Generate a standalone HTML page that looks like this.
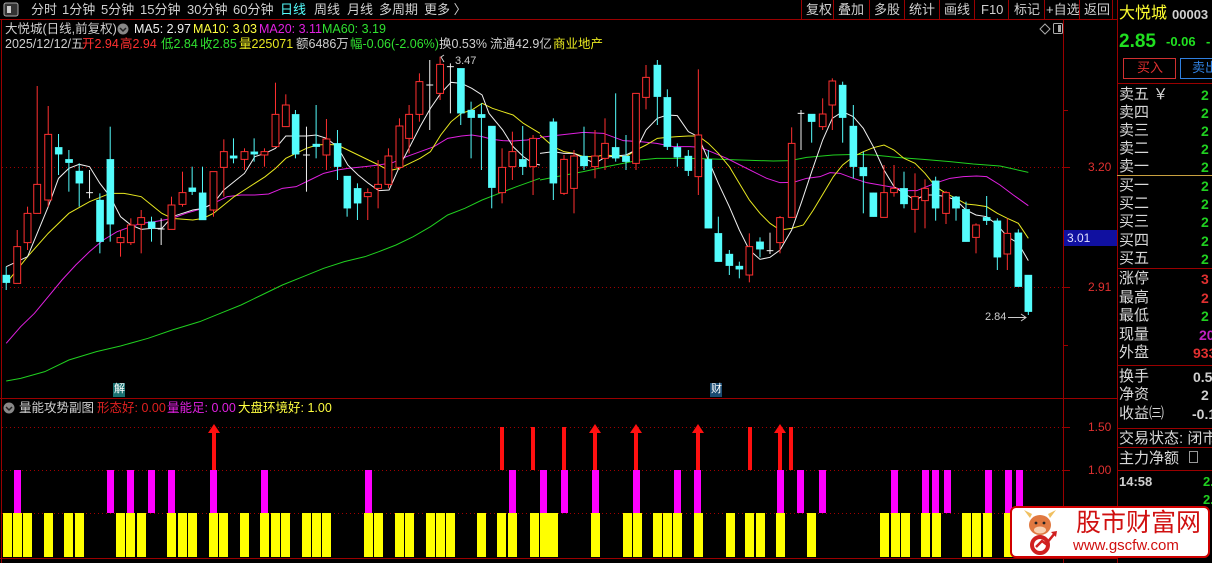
<!DOCTYPE html>
<html><head><meta charset="utf-8"><style>
*{margin:0;padding:0;box-sizing:border-box}
body{width:1212px;height:563px;background:#000;overflow:hidden;position:relative;font-family:"Liberation Sans","Noto Sans CJK SC",sans-serif;font-size:12px;color:#c8c8c8}
.t{position:absolute;white-space:nowrap;line-height:1}
svg{position:absolute;left:0;top:0}
.rp{position:absolute;left:1119px;font-size:15px;color:#d8d8d8;line-height:1;white-space:nowrap}
.rv{position:absolute;left:1201px;font-size:14px;font-weight:bold;line-height:1}
</style></head><body>
<svg width="1212" height="563" viewBox="0 0 1212 563">
<g stroke="#9a0000" stroke-width="1" fill="none">
<line x1="0" y1="19.5" x2="1117" y2="19.5"/>
<line x1="1.5" y1="20" x2="1.5" y2="563"/>
<line x1="0" y1="398.5" x2="1117" y2="398.5"/>
<line x1="0" y1="558.5" x2="1117" y2="558.5"/>
<line x1="1063.5" y1="20" x2="1063.5" y2="563"/>
<line x1="1117.5" y1="0" x2="1117.5" y2="563"/>
<line x1="1117" y1="83.5" x2="1212" y2="83.5"/>
<line x1="1117" y1="268.5" x2="1212" y2="268.5"/>
<line x1="1117" y1="365.5" x2="1212" y2="365.5"/>
<line x1="1117" y1="428.5" x2="1212" y2="428.5"/>
<line x1="1117" y1="447.5" x2="1212" y2="447.5"/>
<line x1="1117" y1="470.5" x2="1212" y2="470.5"/>
<line x1="1063" y1="167.5" x2="1070" y2="167.5"/>
<line x1="1063" y1="287.5" x2="1070" y2="287.5"/>
<line x1="1063" y1="427.5" x2="1070" y2="427.5"/>
<line x1="1063" y1="470.5" x2="1070" y2="470.5"/>
<line x1="1063" y1="513.5" x2="1070" y2="513.5"/>
<line x1="1063" y1="110.5" x2="1068" y2="110.5"/>
<line x1="1063" y1="345.5" x2="1068" y2="345.5"/>
<line x1="801.5" y1="0" x2="801.5" y2="19"/><line x1="833.5" y1="0" x2="833.5" y2="19"/>
<line x1="869.5" y1="0" x2="869.5" y2="19"/><line x1="904.5" y1="0" x2="904.5" y2="19"/>
<line x1="939.5" y1="0" x2="939.5" y2="19"/><line x1="974.5" y1="0" x2="974.5" y2="19"/>
<line x1="1008.5" y1="0" x2="1008.5" y2="19"/><line x1="1044.5" y1="0" x2="1044.5" y2="19"/>
<line x1="1079.5" y1="0" x2="1079.5" y2="19"/><line x1="1112.5" y1="0" x2="1112.5" y2="19"/>
</g>
<line x1="1117" y1="175.5" x2="1212" y2="175.5" stroke="#c8a040"/>
<g stroke="#a00000" stroke-dasharray="1,3">
<line x1="2" y1="167.5" x2="1063" y2="167.5"/>
<line x1="2" y1="287.5" x2="1063" y2="287.5"/>
<line x1="2" y1="427.5" x2="1063" y2="427.5"/>
<line x1="2" y1="470.5" x2="1063" y2="470.5"/>
<line x1="2" y1="513.5" x2="1063" y2="513.5"/>
</g>
<rect x="4" y="3" width="14" height="13" rx="2" fill="#333" stroke="#aaa"/>
<rect x="7" y="6" width="4" height="7" fill="#ccc"/>
<rect x="1064" y="230" width="53" height="16" fill="#1010a0"/>
<rect x="1123.5" y="58.5" width="52" height="20" fill="none" stroke="#d03030"/>
<rect x="1180.5" y="58.5" width="40" height="20" fill="none" stroke="#3080e0"/>
<path d="M1045 23 L1050 28 L1045 33 L1040 28 Z" fill="none" stroke="#aaa" transform="translate(0,1)"/>
<rect x="1053.5" y="23.5" width="9" height="10" rx="1" fill="none" stroke="#aaa"/><rect x="1058" y="25" width="3" height="7" fill="#aaa"/>
<circle cx="123" cy="29" r="5.5" fill="#888"/><path d="M120 28 L123 31 L126 28" stroke="#222" fill="none" stroke-width="1.5"/>
<circle cx="9" cy="408" r="5.5" fill="#888"/><path d="M6 407 L9 410 L12 407" stroke="#222" fill="none" stroke-width="1.5"/>

<g transform="translate(0,50) scale(0.34435,0.33333)" fill="none" stroke-width="1" >
<polyline vector-effect="non-scaling-stroke" stroke="#20d020" points="18,993 60,985 130,965 200,930 280,905 350,888 430,865 500,840 580,815 640,790 700,765 760,735 820,705 880,680 940,655 1000,635 1060,620 1100,605 1150,585 1200,560 1250,530 1300,495 1350,475 1400,450 1450,430 1500,410 1568,385"/>
<polyline vector-effect="non-scaling-stroke" stroke="#e020e0" points="18,880 60,830 100,790 140,740 180,690 220,645 260,605 300,570 340,545 380,530 410,520 450,515 500,505 540,490 590,475 620,460 660,440 700,435 740,435 780,432 820,415 860,410 900,390 940,370 980,360 1010,355 1060,350 1100,345 1140,338 1180,320 1220,305 1260,290 1300,265 1340,258 1370,255 1400,260 1430,268 1460,272 1490,273 1530,270 1568,265"/>
<polyline vector-effect="non-scaling-stroke" stroke="#e8e820" points="18,700 80,620 140,550 200,490 260,455 320,430 360,430 410,440 440,465 470,490 500,505 560,510 590,505 620,490 650,465 680,440 710,420 740,400 770,380 800,355 830,325 860,310 890,295 920,285 950,283 980,285 1010,300 1040,315 1070,330 1100,345 1130,362 1160,355 1190,340 1220,325 1250,305 1280,255 1310,215 1340,190 1370,180 1400,160 1430,175 1460,185 1490,195 1520,220 1568,250"/>
<polyline vector-effect="non-scaling-stroke" stroke="#f0f0f0" points="18,650 80,620 140,470 170,385 200,355 230,343 260,350 290,400 320,440 350,500 380,525 410,538 440,535 470,535 500,500 530,490 560,480 590,475 620,460 650,420 680,395 710,370 740,320 770,310 800,295 830,258 860,258 890,258 918,255 948,265 980,290 1010,345 1040,375 1070,400 1100,422 1130,420 1160,350 1190,290 1220,230 1250,175 1280,130 1310,97 1340,100 1370,115 1400,135 1420,190 1460,240 1490,290 1520,320 1548,340 1568,345"/>
</g>
<g transform="translate(540,50) scale(0.33333)" fill="none">
<polyline vector-effect="non-scaling-stroke" stroke="#20d020" points="0,390 60,378 130,365 200,350 260,338 300,330 350,325 450,325 520,327 600,330 700,333 750,332 800,322 880,315 950,313 1000,315 1070,322 1150,328 1230,335 1300,342 1380,348 1465,367"/>
<polyline vector-effect="non-scaling-stroke" stroke="#e020e0" points="0,262 60,255 130,247 190,250 250,272 300,275 350,280 400,290 450,290 480,292 520,308 560,325 600,345 640,365 680,385 720,398 760,397 800,385 840,380 870,368 900,370 940,385 980,398 1020,405 1060,412 1100,422 1130,422 1160,410 1190,398 1230,385 1270,380 1310,378 1340,380 1380,405 1420,435 1465,467"/>
<polyline vector-effect="non-scaling-stroke" stroke="#e8e820" points="0,255 40,290 72,305 102,310 132,320 165,320 195,315 227,318 258,320 288,300 318,285 352,265 382,262 412,260 445,258 475,258 505,280 535,310 568,350 598,400 628,450 660,490 690,520 720,540 755,535 790,525 820,480 850,430 880,380 908,345 940,320 970,305 1000,293 1032,285 1062,300 1092,325 1125,340 1155,370 1187,410 1218,430 1248,445 1278,462 1308,465 1340,470 1372,490 1402,505 1435,520 1465,565"/>
<polyline vector-effect="non-scaling-stroke" stroke="#f0f0f0" points="0,310 40,305 72,310 102,310 132,325 165,340 195,322 227,318 258,315 288,300 318,240 352,205 382,195 412,197 445,245 475,260 505,330 535,400 568,470 598,540 628,600 660,628 690,622 720,600 755,540 785,455 815,365 848,270 877,205 908,185 940,200 970,235 1000,290 1032,360 1062,410 1092,430 1125,450 1155,435 1187,435 1218,440 1248,450 1278,480 1308,495 1340,500 1372,525 1402,560 1435,580 1465,632"/>
</g>

<g transform="translate(0,50) scale(0.34435,0.33333)">
<g stroke="#ff3030" fill="#000">
<line vector-effect="non-scaling-stroke" x1="50" y1="540" x2="50" y2="700"/><rect vector-effect="non-scaling-stroke" x="40" y="590" width="20" height="110"/>
<line vector-effect="non-scaling-stroke" x1="80" y1="470" x2="80" y2="600"/><rect vector-effect="non-scaling-stroke" x="70" y="490" width="20" height="88"/>
<line vector-effect="non-scaling-stroke" x1="108" y1="108" x2="108" y2="490"/><rect vector-effect="non-scaling-stroke" x="98" y="403" width="20" height="87"/>
<line vector-effect="non-scaling-stroke" x1="140" y1="168" x2="140" y2="470"/><rect vector-effect="non-scaling-stroke" x="130" y="253" width="20" height="197"/>
<line vector-effect="non-scaling-stroke" x1="350" y1="540" x2="350" y2="620"/><rect vector-effect="non-scaling-stroke" x="340" y="563" width="20" height="15"/>
<line vector-effect="non-scaling-stroke" x1="380" y1="505" x2="380" y2="585"/><rect vector-effect="non-scaling-stroke" x="370" y="525" width="20" height="53"/>
<line vector-effect="non-scaling-stroke" x1="410" y1="480" x2="410" y2="610"/><rect vector-effect="non-scaling-stroke" x="400" y="503" width="20" height="20"/>
<line vector-effect="non-scaling-stroke" x1="498" y1="440" x2="498" y2="538"/><rect vector-effect="non-scaling-stroke" x="488" y="465" width="20" height="73"/>
<line vector-effect="non-scaling-stroke" x1="530" y1="365" x2="530" y2="470"/><rect vector-effect="non-scaling-stroke" x="520" y="428" width="20" height="35"/>
<line vector-effect="non-scaling-stroke" x1="620" y1="365" x2="620" y2="500"/><rect vector-effect="non-scaling-stroke" x="610" y="365" width="20" height="115"/>
<line vector-effect="non-scaling-stroke" x1="650" y1="268" x2="650" y2="440"/><rect vector-effect="non-scaling-stroke" x="640" y="305" width="20" height="47"/>
<line vector-effect="non-scaling-stroke" x1="710" y1="295" x2="710" y2="360"/><rect vector-effect="non-scaling-stroke" x="700" y="305" width="20" height="23"/>
<line vector-effect="non-scaling-stroke" x1="768" y1="295" x2="768" y2="350"/><rect vector-effect="non-scaling-stroke" x="758" y="305" width="20" height="10"/>
<line vector-effect="non-scaling-stroke" x1="800" y1="98" x2="800" y2="290"/><rect vector-effect="non-scaling-stroke" x="790" y="193" width="20" height="97"/>
<line vector-effect="non-scaling-stroke" x1="830" y1="133" x2="830" y2="230"/><rect vector-effect="non-scaling-stroke" x="820" y="165" width="20" height="65"/>
<line vector-effect="non-scaling-stroke" x1="948" y1="207" x2="948" y2="360"/><rect vector-effect="non-scaling-stroke" x="938" y="267" width="20" height="48"/>
<line vector-effect="non-scaling-stroke" x1="1068" y1="415" x2="1068" y2="510"/><rect vector-effect="non-scaling-stroke" x="1058" y="428" width="20" height="12"/>
<line vector-effect="non-scaling-stroke" x1="1098" y1="330" x2="1098" y2="475"/><rect vector-effect="non-scaling-stroke" x="1088" y="403" width="20" height="12"/>
<line vector-effect="non-scaling-stroke" x1="1128" y1="295" x2="1128" y2="415"/><rect vector-effect="non-scaling-stroke" x="1118" y="318" width="20" height="85"/>
<line vector-effect="non-scaling-stroke" x1="1160" y1="205" x2="1160" y2="360"/><rect vector-effect="non-scaling-stroke" x="1150" y="228" width="20" height="124"/>
<line vector-effect="non-scaling-stroke" x1="1188" y1="165" x2="1188" y2="310"/><rect vector-effect="non-scaling-stroke" x="1178" y="193" width="20" height="72"/>
<line vector-effect="non-scaling-stroke" x1="1218" y1="70" x2="1218" y2="215"/><rect vector-effect="non-scaling-stroke" x="1208" y="95" width="20" height="98"/>
<line vector-effect="non-scaling-stroke" x1="1278" y1="20" x2="1278" y2="150"/><rect vector-effect="non-scaling-stroke" x="1268" y="43" width="20" height="87"/>
<line vector-effect="non-scaling-stroke" x1="1458" y1="295" x2="1458" y2="460"/><rect vector-effect="non-scaling-stroke" x="1448" y="352" width="20" height="76"/>
<line vector-effect="non-scaling-stroke" x1="1488" y1="245" x2="1488" y2="390"/><rect vector-effect="non-scaling-stroke" x="1478" y="305" width="20" height="45"/>
<line vector-effect="non-scaling-stroke" x1="1548" y1="255" x2="1548" y2="435"/><rect vector-effect="non-scaling-stroke" x="1538" y="265" width="20" height="85"/>
</g>
<g stroke="#54fcfc" fill="#54fcfc">
<line vector-effect="non-scaling-stroke" x1="18" y1="650" x2="18" y2="720"/><rect x="8" y="675" width="21" height="23"/>
<line vector-effect="non-scaling-stroke" x1="170" y1="252" x2="170" y2="375"/><rect x="160" y="292" width="21" height="21"/>
<line vector-effect="non-scaling-stroke" x1="200" y1="300" x2="200" y2="425"/><rect x="190" y="328" width="21" height="10"/>
<line vector-effect="non-scaling-stroke" x1="230" y1="340" x2="230" y2="470"/><rect x="220" y="363" width="21" height="37"/>
<line vector-effect="non-scaling-stroke" x1="290" y1="430" x2="290" y2="610"/><rect x="280" y="450" width="21" height="125"/>
<line vector-effect="non-scaling-stroke" x1="320" y1="230" x2="320" y2="575"/><rect x="310" y="328" width="21" height="195"/>
<line vector-effect="non-scaling-stroke" x1="440" y1="500" x2="440" y2="575"/><rect x="430" y="515" width="21" height="20"/>
<line vector-effect="non-scaling-stroke" x1="558" y1="350" x2="558" y2="435"/><rect x="548" y="413" width="21" height="12"/>
<line vector-effect="non-scaling-stroke" x1="588" y1="350" x2="588" y2="510"/><rect x="578" y="428" width="21" height="82"/>
<line vector-effect="non-scaling-stroke" x1="678" y1="265" x2="678" y2="340"/><rect x="668" y="317" width="21" height="8"/>
<line vector-effect="non-scaling-stroke" x1="738" y1="265" x2="738" y2="335"/><rect x="728" y="305" width="21" height="8"/>
<line vector-effect="non-scaling-stroke" x1="858" y1="180" x2="858" y2="325"/><rect x="848" y="193" width="21" height="120"/>
<line vector-effect="non-scaling-stroke" x1="918" y1="165" x2="918" y2="325"/><rect x="908" y="282" width="21" height="8"/>
<line vector-effect="non-scaling-stroke" x1="980" y1="240" x2="980" y2="390"/><rect x="970" y="280" width="21" height="70"/>
<line vector-effect="non-scaling-stroke" x1="1008" y1="378" x2="1008" y2="500"/><rect x="998" y="378" width="21" height="97"/>
<line vector-effect="non-scaling-stroke" x1="1038" y1="400" x2="1038" y2="510"/><rect x="1028" y="415" width="21" height="45"/>
<line vector-effect="non-scaling-stroke" x1="1338" y1="55" x2="1338" y2="225"/><rect x="1328" y="55" width="21" height="135"/>
<line vector-effect="non-scaling-stroke" x1="1368" y1="155" x2="1368" y2="325"/><rect x="1358" y="180" width="21" height="23"/>
<line vector-effect="non-scaling-stroke" x1="1398" y1="160" x2="1398" y2="360"/><rect x="1388" y="193" width="21" height="10"/>
<line vector-effect="non-scaling-stroke" x1="1428" y1="228" x2="1428" y2="475"/><rect x="1418" y="228" width="21" height="185"/>
<line vector-effect="non-scaling-stroke" x1="1518" y1="228" x2="1518" y2="375"/><rect x="1508" y="328" width="21" height="22"/>
</g>
<g stroke="#f0f0f0">
<line vector-effect="non-scaling-stroke" x1="260" y1="360" x2="260" y2="445"/><line vector-effect="non-scaling-stroke" x1="250" y1="428" x2="270" y2="428"/>
<line vector-effect="non-scaling-stroke" x1="468" y1="505" x2="468" y2="585"/><line vector-effect="non-scaling-stroke" x1="458" y1="537" x2="478" y2="537"/>
<line vector-effect="non-scaling-stroke" x1="890" y1="230" x2="890" y2="425"/><line vector-effect="non-scaling-stroke" x1="880" y1="315" x2="900" y2="315"/>
<line vector-effect="non-scaling-stroke" x1="1248" y1="30" x2="1248" y2="240"/><line vector-effect="non-scaling-stroke" x1="1238" y1="105" x2="1258" y2="105"/>
<line vector-effect="non-scaling-stroke" x1="1308" y1="40" x2="1308" y2="190"/><line vector-effect="non-scaling-stroke" x1="1298" y1="50" x2="1318" y2="50"/>
</g>
</g>

<g transform="translate(540,50) scale(0.33333)">
<g stroke="#ff3030" fill="#000">
<line vector-effect="non-scaling-stroke" x1="72" y1="315" x2="72" y2="435"/><rect vector-effect="non-scaling-stroke" x="62" y="328" width="20" height="102"/>
<line vector-effect="non-scaling-stroke" x1="102" y1="300" x2="102" y2="490"/><rect vector-effect="non-scaling-stroke" x="92" y="318" width="20" height="97"/>
<line vector-effect="non-scaling-stroke" x1="165" y1="240" x2="165" y2="385"/><rect vector-effect="non-scaling-stroke" x="155" y="318" width="20" height="32"/>
<line vector-effect="non-scaling-stroke" x1="195" y1="205" x2="195" y2="360"/><rect vector-effect="non-scaling-stroke" x="185" y="280" width="20" height="45"/>
<line vector-effect="non-scaling-stroke" x1="288" y1="130" x2="288" y2="360"/><rect vector-effect="non-scaling-stroke" x="278" y="130" width="20" height="210"/>
<line vector-effect="non-scaling-stroke" x1="318" y1="45" x2="318" y2="178"/><rect vector-effect="non-scaling-stroke" x="308" y="82" width="20" height="60"/>
<line vector-effect="non-scaling-stroke" x1="475" y1="58" x2="475" y2="435"/><rect vector-effect="non-scaling-stroke" x="465" y="255" width="20" height="125"/>
<line vector-effect="non-scaling-stroke" x1="628" y1="550" x2="628" y2="697"/><rect vector-effect="non-scaling-stroke" x="618" y="590" width="20" height="85"/>
<line vector-effect="non-scaling-stroke" x1="720" y1="498" x2="720" y2="610"/><rect vector-effect="non-scaling-stroke" x="710" y="503" width="20" height="75"/>
<line vector-effect="non-scaling-stroke" x1="755" y1="232" x2="755" y2="502"/><rect vector-effect="non-scaling-stroke" x="745" y="280" width="20" height="222"/>
<line vector-effect="non-scaling-stroke" x1="848" y1="145" x2="848" y2="240"/><rect vector-effect="non-scaling-stroke" x="838" y="192" width="20" height="38"/>
<line vector-effect="non-scaling-stroke" x1="877" y1="85" x2="877" y2="240"/><rect vector-effect="non-scaling-stroke" x="867" y="93" width="20" height="72"/>
<line vector-effect="non-scaling-stroke" x1="1032" y1="345" x2="1032" y2="502"/><rect vector-effect="non-scaling-stroke" x="1022" y="428" width="20" height="74"/>
<line vector-effect="non-scaling-stroke" x1="1062" y1="345" x2="1062" y2="440"/><rect vector-effect="non-scaling-stroke" x="1052" y="415" width="20" height="13"/>
<line vector-effect="non-scaling-stroke" x1="1125" y1="370" x2="1125" y2="548"/><rect vector-effect="non-scaling-stroke" x="1115" y="440" width="20" height="38"/>
<line vector-effect="non-scaling-stroke" x1="1155" y1="388" x2="1155" y2="535"/><rect vector-effect="non-scaling-stroke" x="1145" y="415" width="20" height="37"/>
<line vector-effect="non-scaling-stroke" x1="1218" y1="423" x2="1218" y2="522"/><rect vector-effect="non-scaling-stroke" x="1208" y="428" width="20" height="62"/>
<line vector-effect="non-scaling-stroke" x1="1308" y1="520" x2="1308" y2="610"/><rect vector-effect="non-scaling-stroke" x="1298" y="525" width="20" height="37"/>
<line vector-effect="non-scaling-stroke" x1="1402" y1="505" x2="1402" y2="660"/><rect vector-effect="non-scaling-stroke" x="1392" y="550" width="20" height="62"/>
</g>
<g stroke="#54fcfc" fill="#54fcfc">
<line vector-effect="non-scaling-stroke" x1="40" y1="205" x2="40" y2="450"/><rect x="29" y="215" width="22" height="185"/>
<line vector-effect="non-scaling-stroke" x1="132" y1="230" x2="132" y2="360"/><rect x="121" y="318" width="22" height="30"/>
<line vector-effect="non-scaling-stroke" x1="227" y1="130" x2="227" y2="335"/><rect x="216" y="292" width="22" height="33"/>
<line vector-effect="non-scaling-stroke" x1="258" y1="255" x2="258" y2="360"/><rect x="247" y="318" width="22" height="17"/>
<line vector-effect="non-scaling-stroke" x1="352" y1="30" x2="352" y2="225"/><rect x="341" y="45" width="22" height="95"/>
<line vector-effect="non-scaling-stroke" x1="382" y1="118" x2="382" y2="300"/><rect x="371" y="142" width="22" height="148"/>
<line vector-effect="non-scaling-stroke" x1="412" y1="280" x2="412" y2="350"/><rect x="401" y="292" width="22" height="30"/>
<line vector-effect="non-scaling-stroke" x1="445" y1="300" x2="445" y2="378"/><rect x="434" y="318" width="22" height="44"/>
<line vector-effect="non-scaling-stroke" x1="505" y1="300" x2="505" y2="535"/><rect x="494" y="328" width="22" height="207"/>
<line vector-effect="non-scaling-stroke" x1="535" y1="500" x2="535" y2="635"/><rect x="524" y="550" width="22" height="85"/>
<line vector-effect="non-scaling-stroke" x1="568" y1="600" x2="568" y2="675"/><rect x="557" y="612" width="22" height="35"/>
<line vector-effect="non-scaling-stroke" x1="598" y1="635" x2="598" y2="685"/><rect x="587" y="648" width="22" height="10"/>
<line vector-effect="non-scaling-stroke" x1="660" y1="562" x2="660" y2="622"/><rect x="649" y="575" width="22" height="23"/>
<line vector-effect="non-scaling-stroke" x1="815" y1="192" x2="815" y2="278"/><rect x="804" y="192" width="22" height="23"/>
<line vector-effect="non-scaling-stroke" x1="908" y1="95" x2="908" y2="278"/><rect x="897" y="105" width="22" height="98"/>
<line vector-effect="non-scaling-stroke" x1="940" y1="165" x2="940" y2="385"/><rect x="929" y="228" width="22" height="122"/>
<line vector-effect="non-scaling-stroke" x1="970" y1="305" x2="970" y2="490"/><rect x="959" y="352" width="22" height="26"/>
<line vector-effect="non-scaling-stroke" x1="1000" y1="428" x2="1000" y2="500"/><rect x="989" y="428" width="22" height="72"/>
<line vector-effect="non-scaling-stroke" x1="1092" y1="365" x2="1092" y2="475"/><rect x="1081" y="415" width="22" height="47"/>
<line vector-effect="non-scaling-stroke" x1="1187" y1="380" x2="1187" y2="512"/><rect x="1176" y="392" width="22" height="83"/>
<line vector-effect="non-scaling-stroke" x1="1248" y1="438" x2="1248" y2="512"/><rect x="1237" y="440" width="22" height="35"/>
<line vector-effect="non-scaling-stroke" x1="1278" y1="455" x2="1278" y2="575"/><rect x="1267" y="478" width="22" height="97"/>
<line vector-effect="non-scaling-stroke" x1="1340" y1="438" x2="1340" y2="525"/><rect x="1329" y="502" width="22" height="10"/>
<line vector-effect="non-scaling-stroke" x1="1372" y1="505" x2="1372" y2="660"/><rect x="1361" y="512" width="22" height="110"/>
<line vector-effect="non-scaling-stroke" x1="1435" y1="538" x2="1435" y2="710"/><rect x="1424" y="548" width="22" height="162"/>
<line vector-effect="non-scaling-stroke" x1="1465" y1="675" x2="1465" y2="795"/><rect x="1454" y="675" width="22" height="110"/>
</g>
<g stroke="#f0f0f0">
<line vector-effect="non-scaling-stroke" x1="690" y1="548" x2="690" y2="612"/><line vector-effect="non-scaling-stroke" x1="680" y1="602" x2="700" y2="602"/>
<line vector-effect="non-scaling-stroke" x1="783" y1="180" x2="783" y2="300"/><line vector-effect="non-scaling-stroke" x1="773" y1="190" x2="793" y2="190"/>
</g>
</g>
<g stroke="#ccc" fill="none">
<line x1="1008" y1="317.5" x2="1026" y2="317.5"/><path d="M1021 314 L1026 317.5 L1021 321"/>
<path d="M444 62 L441 57 L444 55"/>
</g>
<rect x="113" y="383" width="12" height="14" fill="#1a7070"/>
<rect x="710" y="383" width="12" height="14" fill="#1a4a70"/>

<g fill="#ffff00">
<rect x="3" y="513" width="9" height="44"/><rect x="13" y="513" width="9" height="44"/><rect x="23" y="513" width="9" height="44"/>
<rect x="44" y="513" width="9" height="44"/><rect x="64" y="513" width="9" height="44"/><rect x="75" y="513" width="9" height="44"/>
<rect x="116" y="513" width="9" height="44"/><rect x="126" y="513" width="9" height="44"/><rect x="137" y="513" width="9" height="44"/>
<rect x="167" y="513" width="9" height="44"/><rect x="178" y="513" width="9" height="44"/><rect x="188" y="513" width="9" height="44"/>
<rect x="209" y="513" width="9" height="44"/><rect x="219" y="513" width="9" height="44"/><rect x="240" y="513" width="9" height="44"/>
<rect x="260" y="513" width="9" height="44"/><rect x="271" y="513" width="9" height="44"/><rect x="281" y="513" width="9" height="44"/>
<rect x="302" y="513" width="9" height="44"/><rect x="312" y="513" width="9" height="44"/><rect x="322" y="513" width="9" height="44"/>
<rect x="364" y="513" width="9" height="44"/><rect x="374" y="513" width="9" height="44"/><rect x="395" y="513" width="9" height="44"/>
<rect x="405" y="513" width="9" height="44"/><rect x="426" y="513" width="9" height="44"/><rect x="436" y="513" width="9" height="44"/>
<rect x="446" y="513" width="9" height="44"/><rect x="477" y="513" width="9" height="44"/><rect x="497" y="513" width="9" height="44"/>
<rect x="508" y="513" width="9" height="44"/><rect x="530" y="513" width="9" height="44"/><rect x="540" y="513" width="9" height="44"/>
<rect x="549" y="513" width="9" height="44"/><rect x="591" y="513" width="9" height="44"/><rect x="623" y="513" width="9" height="44"/>
<rect x="633" y="513" width="9" height="44"/><rect x="653" y="513" width="9" height="44"/><rect x="663" y="513" width="9" height="44"/>
<rect x="673" y="513" width="9" height="44"/><rect x="694" y="513" width="9" height="44"/><rect x="726" y="513" width="9" height="44"/>
<rect x="745" y="513" width="9" height="44"/><rect x="756" y="513" width="9" height="44"/><rect x="776" y="513" width="9" height="44"/>
<rect x="807" y="513" width="9" height="44"/><rect x="880" y="513" width="9" height="44"/><rect x="891" y="513" width="9" height="44"/>
<rect x="901" y="513" width="9" height="44"/><rect x="921" y="513" width="9" height="44"/><rect x="932" y="513" width="9" height="44"/>
<rect x="962" y="513" width="9" height="44"/><rect x="972" y="513" width="9" height="44"/><rect x="983" y="513" width="9" height="44"/>
<rect x="1004" y="513" width="9" height="44"/>
</g>
<g fill="#ff00ff">
<rect x="14" y="470" width="7" height="43"/><rect x="107" y="470" width="7" height="43"/><rect x="127" y="470" width="7" height="43"/>
<rect x="148" y="470" width="7" height="43"/><rect x="168" y="470" width="7" height="43"/><rect x="210" y="470" width="7" height="43"/>
<rect x="261" y="470" width="7" height="43"/><rect x="365" y="470" width="7" height="43"/><rect x="509" y="470" width="7" height="43"/>
<rect x="540" y="470" width="7" height="43"/><rect x="561" y="470" width="7" height="43"/><rect x="592" y="470" width="7" height="43"/>
<rect x="633" y="470" width="7" height="43"/><rect x="674" y="470" width="7" height="43"/><rect x="694" y="470" width="7" height="43"/>
<rect x="777" y="470" width="7" height="43"/><rect x="797" y="470" width="7" height="43"/><rect x="819" y="470" width="7" height="43"/>
<rect x="891" y="470" width="7" height="43"/><rect x="922" y="470" width="7" height="43"/><rect x="932" y="470" width="7" height="43"/>
<rect x="944" y="470" width="7" height="43"/><rect x="985" y="470" width="7" height="43"/><rect x="1005" y="470" width="7" height="43"/>
<rect x="1016" y="470" width="7" height="43"/>
</g>
<g fill="#ff1010">
<rect x="500" y="427" width="4" height="43"/><rect x="531" y="427" width="4" height="43"/><rect x="562" y="427" width="4" height="43"/>
<rect x="748" y="427" width="4" height="43"/><rect x="789" y="427" width="4" height="43"/>
<rect x="212" y="432" width="4" height="38"/><path d="M208 433 L214 424 L220 433 Z"/>
<rect x="593" y="432" width="4" height="38"/><path d="M589 433 L595 424 L601 433 Z"/>
<rect x="634" y="432" width="4" height="38"/><path d="M630 433 L636 424 L642 433 Z"/>
<rect x="696" y="432" width="4" height="38"/><path d="M692 433 L698 424 L704 433 Z"/>
<rect x="778" y="432" width="4" height="38"/><path d="M774 433 L780 424 L786 433 Z"/>
</g>
<rect x="1189.5" y="451.5" width="8" height="11" fill="none" stroke="#999"/>
<rect x="1011" y="507" width="198" height="50" rx="5" fill="#fff" stroke="#d00000" stroke-width="2"/>
<ellipse cx="1040" cy="525" rx="11" ry="10" fill="#e07840"/>
<path d="M1030 518 L1024 510 L1032 514 Z M1050 518 L1056 510 L1048 514 Z" fill="#f0c060"/>
<ellipse cx="1040" cy="530" rx="6" ry="3.5" fill="#f8d0b0"/>
<circle cx="1036" cy="523" r="1.4" fill="#222"/><circle cx="1044" cy="523" r="1.4" fill="#222"/>
<circle cx="1040" cy="545" r="8" fill="none" stroke="#d02020" stroke-width="4"/>
<path d="M1036 547 L1042 541 L1046 544 L1055 533" stroke="#d02020" stroke-width="2.5" fill="none"/>
<path d="M1051 532 L1057 531 L1056 537 Z" fill="#d02020"/>
</svg>

<div class="t" style="left:31px;top:3px;font-size:13px;color:#d0d0d0">分时</div>
<div class="t" style="left:62px;top:3px;font-size:13px;color:#d0d0d0">1分钟</div>
<div class="t" style="left:101px;top:3px;font-size:13px;color:#d0d0d0">5分钟</div>
<div class="t" style="left:140px;top:3px;font-size:13px;color:#d0d0d0">15分钟</div>
<div class="t" style="left:187px;top:3px;font-size:13px;color:#d0d0d0">30分钟</div>
<div class="t" style="left:233px;top:3px;font-size:13px;color:#d0d0d0">60分钟</div>
<div class="t" style="left:280px;top:3px;font-size:13px;color:#54fcfc">日线</div>
<div class="t" style="left:314px;top:3px;font-size:13px;color:#d0d0d0">周线</div>
<div class="t" style="left:347px;top:3px;font-size:13px;color:#d0d0d0">月线</div>
<div class="t" style="left:379px;top:3px;font-size:13px;color:#d0d0d0">多周期</div>
<div class="t" style="left:424px;top:3px;font-size:13px;color:#d0d0d0">更多 〉</div>
<div class="t" style="left:806px;top:3px;font-size:13px;color:#d0d0d0">复权</div>
<div class="t" style="left:838px;top:3px;font-size:13px;color:#d0d0d0">叠加</div>
<div class="t" style="left:874px;top:3px;font-size:13px;color:#d0d0d0">多股</div>
<div class="t" style="left:909px;top:3px;font-size:13px;color:#d0d0d0">统计</div>
<div class="t" style="left:944px;top:3px;font-size:13px;color:#d0d0d0">画线</div>
<div class="t" style="left:981px;top:3px;font-size:13px;color:#d0d0d0">F10</div>
<div class="t" style="left:1014px;top:3px;font-size:13px;color:#d0d0d0">标记</div>
<div class="t" style="left:1046px;top:3px;font-size:13px;color:#d0d0d0">+自选</div>
<div class="t" style="left:1084px;top:3px;font-size:13px;color:#d0d0d0">返回</div>

<div class="t" style="left:5px;top:23px;font-size:12.5px;color:#d0d0d0">大悦城(日线,前复权)</div>
<div class="t" style="left:134px;top:23px;font-size:12.5px;color:#f0f0f0">MA5: 2.97</div>
<div class="t" style="left:193px;top:23px;font-size:12.5px;color:#ffff40">MA10: 3.03</div>
<div class="t" style="left:259px;top:23px;font-size:12.5px;color:#e020e0">MA20: 3.11</div>
<div class="t" style="left:322px;top:23px;font-size:12.5px;color:#30e030">MA60: 3.19</div>
<div class="t" style="left:5px;top:38px;font-size:12.5px;color:#d0d0d0">2025/12/12/五</div>
<div class="t" style="left:82px;top:38px;font-size:12.5px;color:#ff3030">开2.94</div>
<div class="t" style="left:120px;top:38px;font-size:12.5px;color:#ff3030">高2.94</div>
<div class="t" style="left:161px;top:38px;font-size:12.5px;color:#30e030">低2.84</div>
<div class="t" style="left:200px;top:38px;font-size:12.5px;color:#30e030">收2.85</div>
<div class="t" style="left:239px;top:38px;font-size:12.5px;color:#e8e820">量225071</div>
<div class="t" style="left:296px;top:38px;font-size:12.5px;color:#d0d0d0">额6486万</div>
<div class="t" style="left:350px;top:38px;font-size:12.5px;color:#30e030">幅-0.06(-2.06%)</div>
<div class="t" style="left:439px;top:38px;font-size:12.5px;color:#d0d0d0">换0.53%</div>
<div class="t" style="left:490px;top:38px;font-size:12.5px;color:#d0d0d0">流通42.9亿</div>
<div class="t" style="left:553px;top:38px;font-size:12.5px;color:#e8e820">商业地产</div>

<div class="t" style="left:455px;top:56px;font-size:11px;color:#ccc">3.47</div>
<div class="t" style="left:985px;top:312px;font-size:11px;color:#ccc">2.84</div>
<div class="t" style="left:114px;top:384px;font-size:11px;color:#fff">解</div>
<div class="t" style="left:711px;top:384px;font-size:11px;color:#fff">财</div>

<div class="t" style="left:1088px;top:161px;font-size:12px;color:#e03030">3.20</div>
<div class="t" style="left:1067px;top:232px;font-size:12px;color:#e0e0ff">3.01</div>
<div class="t" style="left:1088px;top:281px;font-size:12px;color:#e03030">2.91</div>
<div class="t" style="left:1088px;top:421px;font-size:12px;color:#e03030">1.50</div>
<div class="t" style="left:1088px;top:464px;font-size:12px;color:#e03030">1.00</div>

<div class="t" style="left:19px;top:402px;font-size:12.5px;color:#d0d0d0">量能攻势副图</div>
<div class="t" style="left:97px;top:402px;font-size:12.5px;color:#e02020">形态好: 0.00</div>
<div class="t" style="left:167px;top:402px;font-size:12.5px;color:#e020e0">量能足: 0.00</div>
<div class="t" style="left:238px;top:402px;font-size:12.5px;color:#ffff40">大盘环境好: 1.00</div>

<div class="t" style="left:1119px;top:6px;font-size:16px;color:#ffff30">大悦城</div>
<div class="t" style="left:1172px;top:8px;font-size:13px;font-weight:bold;color:#d0d0d0">00003</div>
<div class="t" style="left:1119px;top:32px;font-size:19px;font-weight:bold;color:#20e020">2.85</div>
<div class="t" style="left:1166px;top:35px;font-size:13px;font-weight:bold;color:#20e020">-0.06</div>
<div class="t" style="left:1206px;top:35px;font-size:13px;font-weight:bold;color:#20e020">-</div>
<div class="t" style="left:1137px;top:61px;font-size:13px;color:#e03030">买入</div>
<div class="t" style="left:1192px;top:61px;font-size:13px;color:#3080e0">卖出</div>

<div class="rp" style="top:87px">卖五 ￥</div><div class="rv" style="top:88px;color:#20d020">2</div>
<div class="rp" style="top:105px">卖四</div><div class="rv" style="top:106px;color:#20d020">2</div>
<div class="rp" style="top:123px">卖三</div><div class="rv" style="top:124px;color:#20d020">2</div>
<div class="rp" style="top:141px">卖二</div><div class="rv" style="top:142px;color:#20d020">2</div>
<div class="rp" style="top:159px">卖一</div><div class="rv" style="top:160px;color:#20d020">2</div>
<div class="rp" style="top:178px">买一</div><div class="rv" style="top:179px;color:#20d020">2</div>
<div class="rp" style="top:196px">买二</div><div class="rv" style="top:197px;color:#20d020">2</div>
<div class="rp" style="top:214px">买三</div><div class="rv" style="top:215px;color:#20d020">2</div>
<div class="rp" style="top:233px">买四</div><div class="rv" style="top:234px;color:#20d020">2</div>
<div class="rp" style="top:251px">买五</div><div class="rv" style="top:252px;color:#20d020">2</div>
<div class="rp" style="top:271px">涨停</div><div class="rv" style="top:272px;color:#e03030">3</div>
<div class="rp" style="top:290px">最高</div><div class="rv" style="top:291px;color:#e03030">2</div>
<div class="rp" style="top:308px">最低</div><div class="rv" style="top:309px;color:#20d020">2</div>
<div class="rp" style="top:327px">现量</div><div class="rv" style="top:328px;left:1199px;color:#c020c0">20</div>
<div class="rp" style="top:345px">外盘</div><div class="rv" style="top:346px;left:1193px;color:#e03030">933</div>
<div class="rp" style="top:369px">换手</div><div class="rv" style="top:370px;left:1193px;color:#d0d0d0">0.5</div>
<div class="rp" style="top:387px">净资</div><div class="rv" style="top:388px;color:#d0d0d0">2</div>
<div class="rp" style="top:406px">收益㈢</div><div class="rv" style="top:407px;left:1192px;color:#d0d0d0">-0.1</div>
<div class="rp" style="top:431px">交易状态: 闭市</div>
<div class="rp" style="top:451px">主力净额</div>
<div class="t" style="left:1119px;top:475px;font-size:13px;font-weight:bold;color:#d0d0d0">14:58</div>
<div class="t" style="left:1203px;top:475px;font-size:13px;font-weight:bold;color:#20d020">2.</div>
<div class="t" style="left:1203px;top:493px;font-size:13px;font-weight:bold;color:#20d020">2.</div>

<div class="t" style="left:1076px;top:511px;font-size:25px;color:#d01010">股市财富网</div>
<div class="t" style="left:1073px;top:538px;font-size:15px;color:#d01010">www.gscfw.com</div>
</body></html>
